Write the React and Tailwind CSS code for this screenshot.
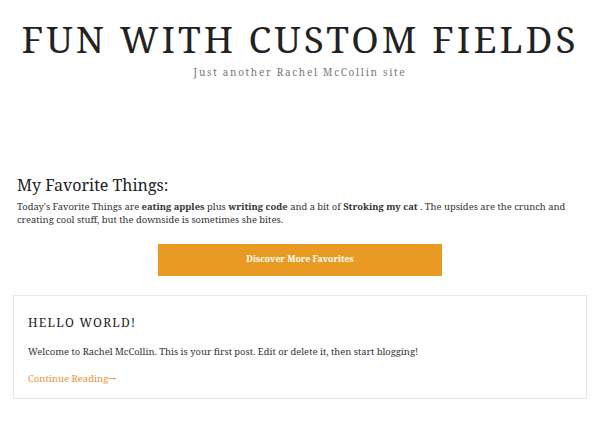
export default function App() {
  const serif = { fontFamily: '"Noto Serif", "DejaVu Serif", serif' };
  return (
    <div className="w-[600px] h-[423px] bg-white overflow-hidden text-[#333]" style={serif}>
      <header className="pt-[17px] flex flex-col items-center">
        <h1 className="text-[37px] leading-[44px] tracking-[3px] text-[#222] whitespace-nowrap">FUN WITH CUSTOM FIELDS</h1>
        <p className="mt-[4px] text-[10px] leading-[14px] tracking-[1.7px] text-[#777]">Just another Rachel McCollin site</p>
      </header>
      <section className="mt-[96px] px-[17px]">
        <h2 className="text-[16px] leading-[20px] text-[#222]">My Favorite Things:</h2>
        <p className="mt-[5px] text-[9.4px] leading-[13px] text-[#333]">
          Today's Favorite Things are <b>eating apples</b> plus <b>writing code</b> and a bit of <b>Stroking my cat</b> . The upsides are the crunch and creating cool stuff, but the downside is sometimes she bites.
        </p>
        <div className="mt-[18px] flex justify-center">
          <div className="w-[284px] h-[32px] bg-[#e89a22] flex items-center justify-center text-white text-[8.7px] font-bold">Discover More Favorites</div>
        </div>
      </section>
      <article className="mx-[13px] mt-[19px] border border-[#e6e6e6] px-[14px] pt-[19px] pb-[13px]">
        <h3 className="text-[12px] leading-[16px] tracking-[1.25px] text-[#222]">HELLO WORLD!</h3>
        <p className="mt-[14px] text-[9.4px] leading-[13px] text-[#333]">Welcome to Rachel McCollin. This is your first post. Edit or delete it, then start blogging!</p>
        <p className="mt-[14px] text-[9.5px] leading-[13px] text-[#e8923a]">Continue Reading→</p>
      </article>
    </div>
  );
}
